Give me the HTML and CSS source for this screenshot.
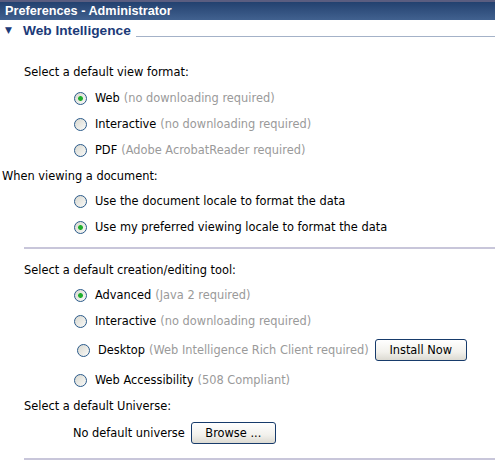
FILE: index.html
```html
<!DOCTYPE html>
<html lang="en">
<head>
    <meta charset="utf-8">
    <title>Preferences - Administrator</title>
    <link rel="stylesheet" href="styles.css">
</head>

<body>
    <div class="titlebar">Preferences - Administrator</div>

    <div class="section-head">
        <span class="tri">&#9660;</span>
        <span class="section-title">Web Intelligence</span>
        <span class="rule"></span>
    </div>

    <div class="panel">
        <div class="label first">Select a default view format:</div>
        <div class="option"><span class="radio checked"></span>Web <span class="note">(no downloading required)</span></div>
        <div class="option"><span class="radio"></span>Interactive <span class="note">(no downloading required)</span></div>
        <div class="option"><span class="radio"></span>PDF <span class="note">(Adobe AcrobatReader required)</span></div>

        <div class="label outdent">When viewing a document:</div>
        <div class="option"><span class="radio"></span>Use the document locale to format the data</div>
        <div class="option"><span class="radio checked"></span>Use my preferred viewing locale to format the data</div>

        <hr class="sep">

        <div class="label">Select a default creation/editing tool:</div>
        <div class="option"><span class="radio checked"></span>Advanced <span class="note">(Java 2 required)</span></div>
        <div class="option"><span class="radio"></span>Interactive <span class="note">(no downloading required)</span></div>
        <div class="option tall"><span class="radio"></span>Desktop <span class="note">(Web Intelligence Rich Client required)</span>
            <button class="btn install">Install Now</button></div>
        <div class="option"><span class="radio"></span>Web Accessibility <span class="note">(508 Compliant)</span></div>

        <div class="label spaced">Select a default Universe:</div>
        <div class="option universe">No default universe <button class="btn browse">Browse ...</button></div>

        <hr class="sep last">
    </div>
</body>

</html>
```

FILE: styles.css
```css
html,
body {
    margin: 0;
    padding: 0;
    background: #fff;
}

body {
    font-family: "DejaVu Sans", Verdana, sans-serif;
    font-size: 11.4px;
    color: #000;
    overflow: hidden;
}

.titlebar {
    height: 18px;
    line-height: 18px;
    padding-left: 5px;
    border-top: 2px solid #5a5d80;
    background: linear-gradient(#23416f, #41618f);
    color: #fff;
    font-family: "Liberation Sans", Arial, sans-serif;
    font-weight: bold;
    font-size: 12.7px;
}

.section-head {
    display: flex;
    align-items: center;
    height: 20px;
}

.tri {
    width: 18px;
    padding-left: 5px;
    font-size: 9px;
    color: #1b3a78;
}

.section-title {
    font-family: "Liberation Sans", Arial, sans-serif;
    font-weight: bold;
    font-size: 13.7px;
    color: #1b3a78;
    padding-right: 5px;
}

.rule {
    flex: 1;
    align-self: flex-end;
    margin-bottom: 3px;
    border-bottom: 1px solid #a4b2c8;
}

.panel {
    padding-left: 24px;
}

.label {
    height: 24px;
    line-height: 24px;
}

.label.first {
    margin-top: 20px;
    margin-bottom: 1px;
}

.label.outdent {
    margin-left: -22px;
    margin-top: 1px;
}

.label.spaced {
    margin-top: 1px;
}

.option {
    display: flex;
    align-items: center;
    height: 26px;
    padding-left: 50px;
}

.option.tall {
    height: 30px;
    margin: 1px 0 2px 0;
    padding-left: 53px;
}

.option.universe {
    height: 28px;
    margin-top: 1px;
    padding-left: 49px;
}

.note {
    color: #9a9a9a;
    margin-left: 4px;
}

.radio {
    box-sizing: border-box;
    width: 13px;
    height: 13px;
    margin-right: 8px;
    border: 1px solid #2a5a8a;
    border-radius: 50%;
    background: linear-gradient(135deg, #d8d8d0, #fafaf8);
}

.radio.checked {
    background: radial-gradient(circle, #1fae2c 0 2px, #9ad69e 2.5px, transparent 3px),
        linear-gradient(135deg, #d8d8d0, #fafaf8);
}

.btn {
    box-sizing: border-box;
    height: 22px;
    padding: 0;
    font-family: "DejaVu Sans", Verdana, sans-serif;
    font-size: 11.4px;
    color: #000;
    border: 1px solid #173b6b;
    border-radius: 3px;
    background: linear-gradient(#ffffff, #f2f1ec 60%, #dcdad2);
}

.btn.install {
    width: 92px;
    margin-left: 6px;
}

.btn.browse {
    width: 85px;
    margin-left: 6px;
}

.sep {
    margin: 7px 0 9px 0;
    border: 0;
    border-top: 2px solid #c8c6da;
}

.sep.last {
    margin-top: 11px;
}
```
